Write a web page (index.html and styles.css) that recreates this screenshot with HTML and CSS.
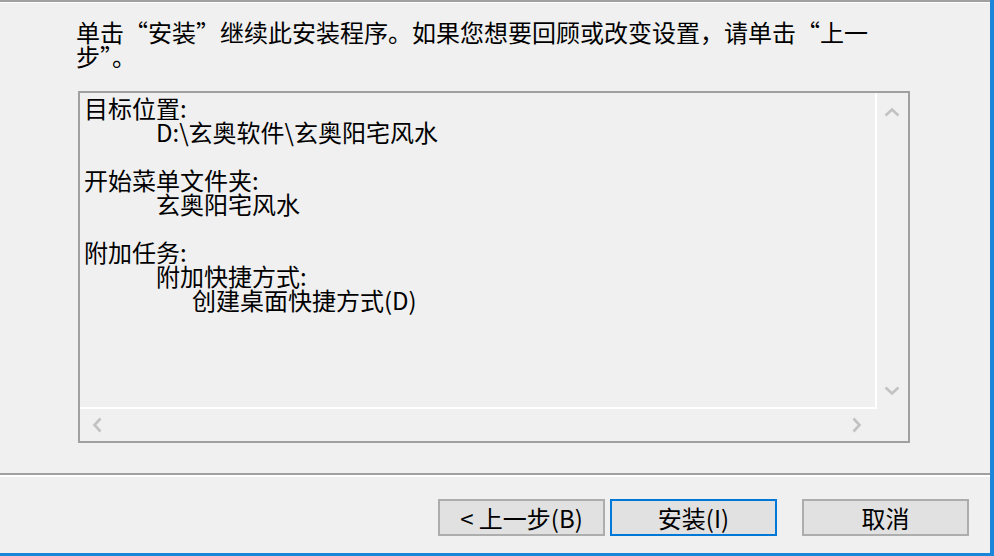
FILE: index.html
```html
<!DOCTYPE html>
<html lang="zh-CN">
<head>
    <meta charset="UTF-8">
    <meta name="viewport" content="width=device-width, initial-scale=1.0">
    <title>安装 - 玄奥阳宅风水</title>
    <link rel="stylesheet" href="styles.css">
</head>
<body>
    <div class="page">
        <p class="intro">单击“安装”继续此安装程序。如果您想要回顾或改变设置，请单击“上一步”。</p>
        <div class="memo">
            <div class="memo-text">
                <div class="line">目标位置:</div>
                <div class="line indent1">D:\玄奥软件\玄奥阳宅风水</div>
                <div class="line"></div>
                <div class="line">开始菜单文件夹:</div>
                <div class="line indent1">玄奥阳宅风水</div>
                <div class="line"></div>
                <div class="line">附加任务:</div>
                <div class="line indent1">附加快捷方式:</div>
                <div class="line indent2">创建桌面快捷方式(D)</div>
            </div>
            <div class="vscroll">
                <svg width="16" height="10" viewBox="0 0 16 10"><polyline points="1.5,8.5 8,2.5 14.5,8.5" /></svg>
                <svg width="16" height="10" viewBox="0 0 16 10"><polyline points="1.5,1.5 8,7.5 14.5,1.5" /></svg>
            </div>
            <div class="hscroll">
                <svg width="10" height="16" viewBox="0 0 10 16"><polyline points="8.5,1.5 2.5,8 8.5,14.5" /></svg>
                <svg width="10" height="16" viewBox="0 0 10 16"><polyline points="1.5,1.5 7.5,8 1.5,14.5" /></svg>
            </div>
            <div class="corner"></div>
        </div>
    </div>
    <div class="footer">
        <button class="btn">&lt; 上一步(B)</button>
        <button class="btn btn-default">安装(I)</button>
        <button class="btn btn-cancel">取消</button>
    </div>
</body>
</html>
```

FILE: styles.css
```css
html, body {
    margin: 0;
    padding: 0;
}
body {
    width: 994px;
    height: 556px;
    box-sizing: border-box;
    display: flex;
    flex-direction: column;
    background: #f0f0f0;
    border-right: 4px solid #1a86d9;
    border-bottom: 3px solid #1a86d9;
    font-family: "Noto Sans CJK SC", sans-serif;
    font-size: 24px;
    color: #000;
    overflow: hidden;
}
.page {
    flex: 1;
    border-top: 2px solid #a0a0a0;
    box-shadow: inset 0 1px #fff;
    padding: 18px 0 0 76px;
}
.intro {
    margin: 0;
    width: 830px;
    line-height: 24px;
}
.memo {
    margin: 23px 0 0 2px;
    width: 832px;
    height: 352px;
    box-sizing: border-box;
    border: 2px solid #a0a0a0;
    display: grid;
    grid-template-columns: 1fr 31px;
    grid-template-rows: 1fr 32px;
}
.memo-text {
    border-right: 2px solid #fff;
    border-bottom: 2px solid #fff;
    padding: 3px 0 0 4px;
}
.line {
    height: 24px;
    line-height: 24px;
    white-space: nowrap;
}
.indent1 {
    padding-left: 72px;
}
.indent2 {
    padding-left: 108px;
}
.vscroll {
    display: flex;
    flex-direction: column;
    justify-content: space-between;
    align-items: center;
    padding: 14px 2px 13px 0;
}
.hscroll {
    display: flex;
    justify-content: space-between;
    align-items: center;
    padding: 0 15px 0 12px;
}
.vscroll polyline, .hscroll polyline {
    fill: none;
    stroke: #c2c2c2;
    stroke-width: 2.6;
}
.footer {
    height: 80px;
    box-sizing: border-box;
    border-top: 2px solid #a0a0a0;
    box-shadow: inset 0 2px #fff;
    padding: 24px 21px 0 0;
    display: flex;
    justify-content: flex-end;
    align-items: flex-start;
}
.btn {
    width: 167px;
    height: 37px;
    margin-left: 5px;
    padding: 0;
    box-sizing: border-box;
    background: #e1e1e1;
    border: 2px solid #adadad;
    font-family: inherit;
    font-size: 24px;
    line-height: 30px;
    color: #000;
}
.btn-default {
    border-color: #0078d7;
}
.btn-cancel {
    margin-left: 25px;
}
```
